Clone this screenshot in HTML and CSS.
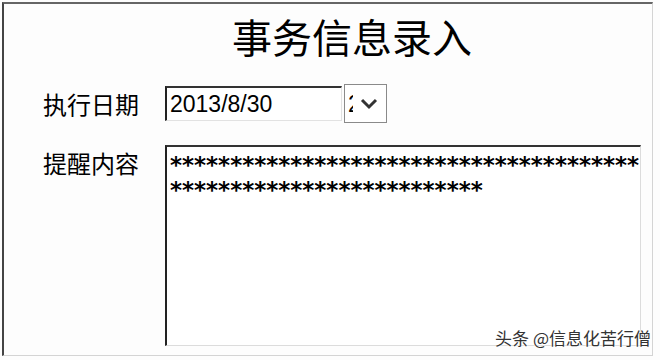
FILE: index.html
```html
<!DOCTYPE html>
<html lang="zh-CN">
<head>
    <meta charset="UTF-8">
    <meta name="viewport" content="width=device-width, initial-scale=1.0">
    <title>事务信息录入</title>
    <link rel="stylesheet" href="styles.css">
</head>
<body>
    <div class="frame">
        <h1 class="title">事务信息录入</h1>
        <div class="form">
            <div class="label label-date">执行日期</div>
            <div class="date-row">
                <div class="date-input">2013/8/30</div>
                <div class="date-button">
                    <span class="peek">2013</span>
                    <svg class="chevron" width="43" height="39" viewBox="0 0 43 39">
                        <polyline points="18,16 25,23 32,16" fill="none" stroke="#333" stroke-width="3"/>
                    </svg>
                </div>
            </div>
            <div class="label label-memo">提醒内容</div>
            <div class="memo">
                <div class="memo-line">***************************************</div>
                <div class="memo-line">**************************</div>
            </div>
        </div>
    </div>
    <div class="watermark">头条 @信息化苦行僧</div>
</body>
</html>
```

FILE: styles.css
```css
body {
    margin: 0;
    background-color: #fdfdfd;
    overflow: hidden;
    font-family: "Noto Sans CJK SC", "Noto Sans", sans-serif;
    color: #111;
}
.frame {
    box-sizing: border-box;
    width: 651px;
    height: 354px;
    margin: 2px 0 0 2px;
    border-left: 2px solid #444;
    border-top: 2px solid #666;
    border-right: 1px solid #d4d4d4;
    border-bottom: 1px solid #d4d4d4;
}
.title {
    margin: 0;
    height: 80px;
    box-sizing: border-box;
    padding: 8px 0 0 228px;
    font-size: 40px;
    font-weight: normal;
    line-height: 48px;
    color: #000;
}
.form {
    display: grid;
    grid-template-columns: 161px 476px;
    row-gap: 22px;
}
.label {
    padding-left: 39px;
    font-size: 24px;
    color: #000;
}
.label-date {
    line-height: 39px;
}
.label-memo {
    line-height: 36px;
}
.date-row {
    display: flex;
    align-items: center;
    gap: 2px;
}
.date-input {
    box-sizing: border-box;
    width: 177px;
    height: 35px;
    padding-left: 3px;
    border-left: 2px solid #222;
    border-top: 2px solid #333;
    border-right: 1px solid #e2e2e2;
    border-bottom: 1px solid #e2e2e2;
    background: #fff;
    font-family: "Liberation Sans", Arial, sans-serif;
    font-size: 23px;
    line-height: 33px;
    color: #000;
}
.date-button {
    position: relative;
    box-sizing: border-box;
    width: 43px;
    height: 39px;
    border: 1px solid #8a8a8a;
    background: #fff;
    overflow: hidden;
}
.peek {
    position: absolute;
    left: 3px;
    top: 3px;
    width: 5px;
    overflow: hidden;
    white-space: nowrap;
    font-family: "Liberation Sans", Arial, sans-serif;
    font-size: 23px;
    line-height: 32px;
    color: #000;
}
.chevron {
    position: absolute;
    left: -1px;
    top: -1px;
}
.memo {
    box-sizing: border-box;
    height: 201px;
    padding: 6px 0 0 3px;
    border-left: 2px solid #222;
    border-top: 2px solid #333;
    border-right: 1px solid #dcdcdc;
    border-bottom: 1px solid #dcdcdc;
    background: #fff;
    overflow: hidden;
}
.memo-line {
    font-family: "DejaVu Sans", sans-serif;
    font-weight: bold;
    font-size: 23px;
    line-height: 25px;
    white-space: nowrap;
    color: #000;
}
.watermark {
    position: absolute;
    right: 9px;
    bottom: 10px;
    font-size: 17px;
    line-height: 24px;
    color: #333;
    text-shadow: 0 0 2px #fff, 0 0 2px #fff;
}
```
